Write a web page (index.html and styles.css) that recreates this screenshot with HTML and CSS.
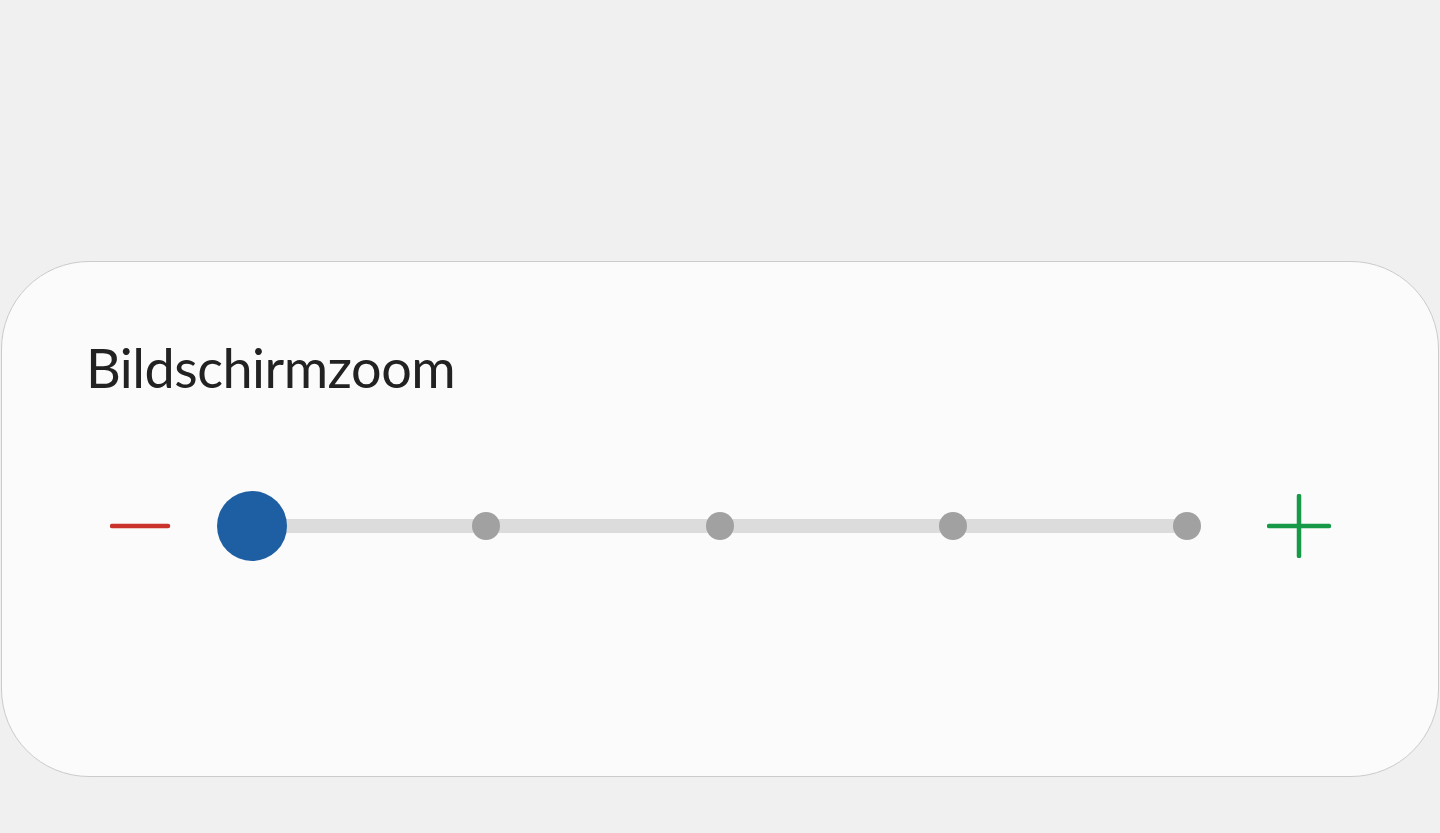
FILE: index.html
```html
<!DOCTYPE html>
<html lang="de">
<head>
  <meta charset="UTF-8">
  <title>Bildschirmzoom</title>
  <link rel="stylesheet" href="styles.css">
</head>
<body>

  <div class="card">
    <h2 class="title">Bildschirmzoom</h2>

    <div class="zoom-row">
      <button class="step minus" aria-label="Verkleinern">
        <svg width="64" height="64" viewBox="0 0 64 64">
          <line x1="2" y1="32" x2="58" y2="32" stroke="#c9332b" stroke-width="4.5" stroke-linecap="round"/>
        </svg>
      </button>

      <div class="track">
        <span class="dot"></span>
        <span class="dot"></span>
        <span class="dot"></span>
        <span class="dot"></span>
        <span class="dot"></span>
        <span class="knob"></span>
      </div>

      <button class="step plus" aria-label="Vergrößern">
        <svg width="64" height="64" viewBox="0 0 64 64">
          <line x1="2" y1="32" x2="62" y2="32" stroke="#179a47" stroke-width="4.5" stroke-linecap="round"/>
          <line x1="32" y1="2" x2="32" y2="62" stroke="#179a47" stroke-width="4.5" stroke-linecap="round"/>
        </svg>
      </button>
    </div>
  </div>

</body>
</html>
```

FILE: styles.css
```css
body {
  margin: 0;
  padding: 261px 1px 0;
  background: #f0f0f0;
  font-family: Lato, 'Noto Sans', sans-serif;
}

.card {
  background: #fbfbfb;
  border: 1px solid #cbcbcb;
  border-radius: 88px;
  height: 514px;
  padding: 0 0 0 84px;
}

.title {
  margin: 66px 0 0;
  font-size: 54px;
  font-weight: 400;
  letter-spacing: -0.5px;
  line-height: 80px;
  color: #222;
}

.zoom-row {
  display: flex;
  align-items: center;
  margin: 68px 0 0 24px;
  height: 100px;
}

.step {
  background: none;
  border: none;
  padding: 0;
  width: 64px;
  height: 64px;
  cursor: pointer;
}

.step svg {
  display: block;
}

.track {
  position: relative;
  width: 963px;
  height: 28px;
  margin: 0 66px 0 64px;
  display: flex;
  justify-content: space-between;
  align-items: center;
}

.track::before {
  content: '';
  position: absolute;
  left: 14px;
  right: 14px;
  top: 7px;
  height: 14px;
  background: #dcdcdc;
}

.dot {
  position: relative;
  width: 28px;
  height: 28px;
  border-radius: 50%;
  background: #a1a1a1;
}

.knob {
  position: absolute;
  left: -21px;
  top: -21px;
  width: 70px;
  height: 70px;
  border-radius: 50%;
  background: #1e5fa4;
}
```
